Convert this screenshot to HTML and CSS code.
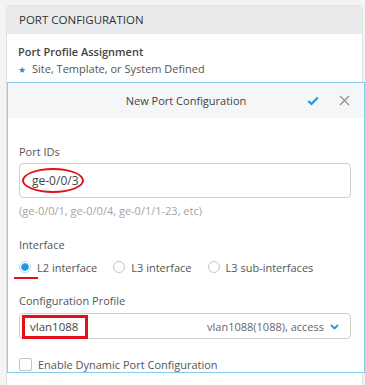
FILE: index.html
```html
<!DOCTYPE html>
<html lang="en">
<head>
  <meta charset="UTF-8">
  <title>Port Configuration</title>
  <link rel="stylesheet" href="styles.css">
</head>
<body>

<div class="card">
  <div class="card-header">PORT CONFIGURATION</div>

  <div class="assign">
    <div class="assign-title">Port Profile Assignment</div>
    <div class="assign-sub"><span class="star">&#9733;</span>Site, Template, or System Defined</div>
  </div>

  <div class="panel">
    <div class="panel-header">
      <span class="panel-title">New Port Configuration</span>
      <span class="panel-actions">
        <svg class="icon-check" width="12" height="10" viewBox="0 0 12 10">
          <path d="M1.2 5 L4.5 8 L10.8 1.5" fill="none" stroke="#1b9ce2" stroke-width="2.2"/>
        </svg>
        <svg class="icon-close" width="11" height="11" viewBox="0 0 11 11">
          <path d="M1 1 L10 10 M10 1 L1 10" fill="none" stroke="#8a8a8a" stroke-width="1.1"/>
        </svg>
      </span>
    </div>

    <div class="panel-body">
      <div class="field-label">Port IDs</div>
      <div class="input">
        <span class="mark-ellipse">ge-0/0/3</span>
      </div>
      <div class="hint">(ge-0/0/1, ge-0/0/4, ge-0/1/1-23, etc)</div>

      <div class="field-label spaced">Interface</div>
      <div class="radios">
        <label class="radio selected"><span class="dot"></span>L2 interface<span class="underline"></span></label>
        <label class="radio"><span class="dot"></span>L3 interface</label>
        <label class="radio"><span class="dot"></span>L3 sub-interfaces</label>
      </div>

      <div class="field-label profile-label">Configuration Profile</div>
      <div class="select">
        <span class="mark-box">vlan1088</span>
        <span class="select-value">vlan1088(1088), access</span>
        <svg class="chevron" width="9" height="6" viewBox="0 0 9 6">
          <path d="M1 1 L4.5 4.5 L8 1" fill="none" stroke="#1b9ce2" stroke-width="1.8"/>
        </svg>
      </div>

      <label class="checkbox"><span class="box"></span>Enable Dynamic Port Configuration</label>
    </div>
  </div>
</div>

</body>
</html>
```

FILE: styles.css
```css
body {
  margin: 0;
  background-color: #f4f4f4;
  font-family: "Open Sans", Arial, sans-serif;
  font-size: 11px;
  color: #444;
  overflow: hidden;
}
.card {
  margin: 5px 2px 0 6px;
  background-color: #fff;
  border: 1px solid #e1e1e1;
  border-radius: 4px;
  height: 400px;
}
.card-header {
  background-color: #e9eaec;
  height: 28px;
  line-height: 28px;
  padding-left: 12px;
  font-size: 11.5px;
  color: #333;
  border-radius: 4px 4px 0 0;
}
.assign {
  padding: 9px 11px 4px;
}
.assign-title {
  font-weight: 600;
  color: #444;
  line-height: 17px;
}
.assign-sub {
  line-height: 17px;
  color: #555;
}
.star {
  color: #2a8fcc;
  font-size: 9px;
  margin-right: 6px;
}
.panel {
  margin-right: -3px;
  border: 1px solid #86cdee;
  background-color: #fff;
}
.panel-header {
  background-color: #f5f6f8;
  height: 35px;
  display: flex;
  align-items: center;
  justify-content: center;
  position: relative;
}
.panel-title {
  color: #444;
}
.panel-actions {
  position: absolute;
  right: 14px;
  top: 12px;
  display: flex;
  align-items: center;
  gap: 20px;
}
.panel-body {
  padding: 25px 11px 0 11px;
}
.field-label {
  line-height: 18px;
  color: #555;
}
.field-label.spaced {
  margin-top: 16px;
}
.input {
  margin-top: 2px;
  height: 33px;
  border: 1px solid #cfcfcf;
  border-radius: 4px;
  display: flex;
  align-items: center;
  padding-left: 12px;
  margin-right: 2px;
}
.mark-ellipse {
  position: relative;
  color: #444;
  font-size: 12px;
}
.mark-ellipse::before {
  content: "";
  position: absolute;
  left: -10px;
  right: -5px;
  top: -4px;
  bottom: -4px;
  border: 2px solid #e3101a;
  border-radius: 50%;
}
.hint {
  margin-top: 4px;
  color: #a5a5a5;
  line-height: 18px;
}
.radios {
  display: flex;
  gap: 16px;
  margin-top: 2px;
  height: 22px;
  align-items: center;
}
.radio {
  display: flex;
  align-items: center;
  position: relative;
  color: #555;
}
.radio .dot {
  width: 12px;
  height: 12px;
  border: 1px solid #c4c4c4;
  border-radius: 50%;
  margin-right: 6px;
  box-sizing: border-box;
}
.radio.selected .dot {
  border-color: #b5daf0;
  background: radial-gradient(circle, #1b9ce2 0, #1b9ce2 3.3px, #fff 4.3px);
}
.underline {
  position: absolute;
  left: -5px;
  top: 17px;
  width: 24px;
  height: 2px;
  background-color: #e3101a;
}
.profile-label {
  margin-top: 14px;
}
.select {
  margin-top: 3px;
  margin-right: 2px;
  height: 24px;
  border: 1px solid #cfcfcf;
  border-radius: 4px;
  display: flex;
  align-items: center;
  padding: 0 11px 0 2px;
}
.mark-box {
  box-sizing: border-box;
  width: 66px;
  height: 24px;
  line-height: 18px;
  border: 3px solid #e3101a;
  padding-left: 5px;
  margin-top: 1px;
  color: #444;
  font-size: 11.5px;
}
.select-value {
  margin-left: auto;
  color: #666;
  margin-right: 6px;
}
.chevron {
  margin-top: 1px;
}
.checkbox {
  display: flex;
  align-items: center;
  margin-top: 18px;
  color: #555;
}
.checkbox .box {
  width: 13px;
  height: 13px;
  border: 1px solid #c4c4c4;
  border-radius: 2px;
  margin-right: 6px;
  box-sizing: border-box;
}
```
